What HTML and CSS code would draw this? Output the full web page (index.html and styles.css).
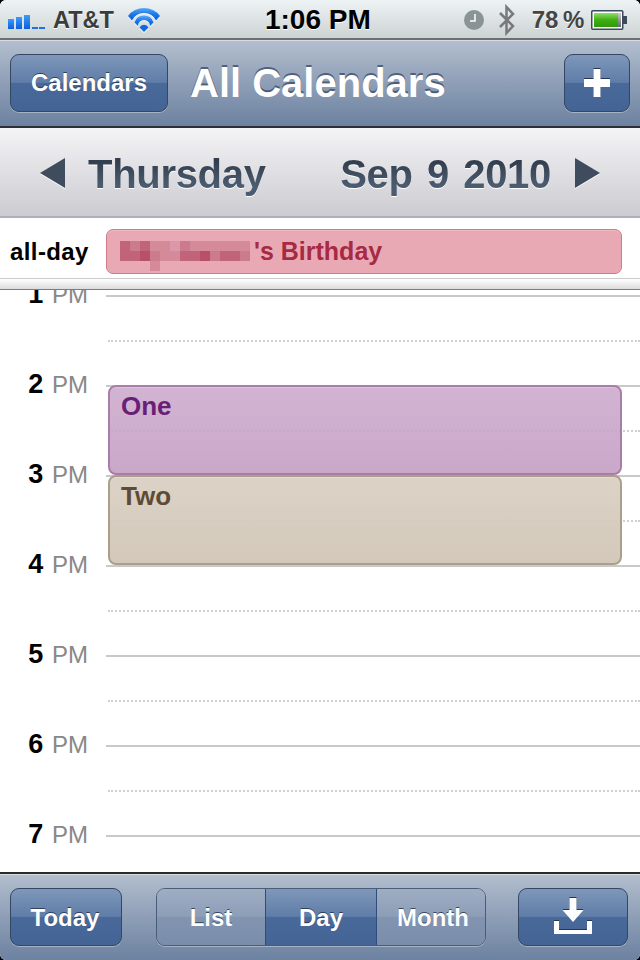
FILE: index.html
```html
<!DOCTYPE html>
<html lang="en">
<head>
  <meta charset="UTF-8" />
  <title>All Calendars</title>
  <link rel="stylesheet" href="styles.css">
</head>
<body>
<div class="screen">

  <!-- Status bar -->
  <div class="status">
    <svg class="signal" width="38" height="14" viewBox="0 0 38 14">
      <defs>
        <linearGradient id="barFill" x1="0" y1="0" x2="0" y2="1">
          <stop offset="0" stop-color="#3f9bf5"/>
          <stop offset="1" stop-color="#0a5fdc"/>
        </linearGradient>
        <linearGradient id="wifiFill" x1="0" y1="0" x2="0" y2="1">
          <stop offset="0" stop-color="#5aaaf8"/>
          <stop offset="0.5" stop-color="#1a78ea"/>
          <stop offset="1" stop-color="#0a5fdc"/>
        </linearGradient>
      </defs>
      <rect x="0" y="4" width="6" height="10" fill="url(#barFill)"/>
      <rect x="8" y="2" width="6" height="12" fill="url(#barFill)"/>
      <rect x="16" y="0" width="6" height="14" fill="url(#barFill)"/>
      <rect x="24" y="12" width="6" height="2" fill="#1a73e8"/>
      <rect x="31" y="12" width="6" height="2" fill="#1a73e8"/>
    </svg>
    <span class="carrier">AT&amp;T</span>
    <svg class="wifi" width="32" height="24" viewBox="0 0 32 24">
      <path d="M0 8 A20 20 0 0 1 32 8 L28 12.500 A13.300 13.300 0 0 0 4 12.500 Z" fill="url(#wifiFill)"/>
      <path d="M6.500 14.500 A10 10 0 0 1 25.500 14.500 L22 18 A6 6 0 0 0 10 18 Z" fill="url(#wifiFill)"/>
      <path d="M16 24 L11.500 19.500 A5 5 0 0 1 20.500 19.500 Z" fill="#0f68e0"/>
    </svg>
    <span class="time">1:06 PM</span>
    <svg class="clock" width="20" height="20" viewBox="0 0 20 20">
      <circle cx="10" cy="10" r="10" fill="#8b9494"/>
      <path d="M11 4 V11 H6" fill="none" stroke="#fff" stroke-width="1.500"/>
    </svg>
    <svg class="bluetooth" width="18" height="32" viewBox="0 0 18 32">
      <path d="M2 9 L15 22 L8.500 29 V3 L15 10 L2 23" fill="none" stroke="#77797a" stroke-width="2.500"/>
    </svg>
    <span class="battery-text">78 %</span>
    <svg class="battery" width="38" height="20" viewBox="0 0 38 20">
      <defs>
        <linearGradient id="batteryFill" x1="0" y1="0" x2="0" y2="1">
          <stop offset="0" stop-color="#8ee06a"/>
          <stop offset="0.5" stop-color="#3fae12"/>
          <stop offset="1" stop-color="#2f9a0a"/>
        </linearGradient>
        <linearGradient id="batteryEmpty" x1="0" y1="0" x2="0" y2="1">
          <stop offset="0" stop-color="#ccc"/>
          <stop offset="1" stop-color="#666"/>
        </linearGradient>
      </defs>
      <rect x="0.750" y="0.750" width="31" height="18.500" rx="1" fill="#fff" stroke="#3d4a5c" stroke-width="1.500"/>
      <rect x="3" y="3" width="24" height="14" fill="url(#batteryFill)"/>
      <rect x="27" y="3" width="3" height="14" fill="url(#batteryEmpty)"/>
      <rect x="32" y="6" width="4" height="8" fill="#3d4a5c"/>
    </svg>
  </div>

  <!-- Nav bar -->
  <div class="navbar">
    <div class="btn btn-calendars">Calendars</div>
    <div class="title">All Calendars</div>
    <div class="btn btn-add">
      <svg class="glyph" width="26" height="28" viewBox="0 0 26 28"><path d="M9.500 0 H16.500 V10 H26 V18 H16.500 V28 H9.500 V18 H0 V10 H9.500 Z" fill="#fff"/></svg>
    </div>
  </div>

  <!-- Date bar -->
  <div class="datebar">
    <svg class="arrow" width="25" height="30" viewBox="0 0 25 30"><path d="M25 0 V30 L0 15 Z" fill="#3f4c5e"/></svg>
    <span class="day">Thursday</span>
    <span class="date">Sep 9 2010</span>
    <svg class="arrow" width="25" height="30" viewBox="0 0 25 30"><path d="M0 0 V30 L25 15 Z" fill="#3f4c5e"/></svg>
  </div>

  <!-- All-day row -->
  <div class="allday">
    <span class="allday-label">all-day</span>
    <div class="allday-event">
      <div class="pixels">
        <i class="p2"></i><i class="p3"></i><i class="p2"></i><i class="p4"></i><i class="p4"></i><i class="p5"></i><i class="p3"></i><i class="p4"></i><i class="p4"></i><i class="p4"></i><i class="p4"></i><i class="p4"></i><i class="p4"></i>
        <i class="p2"></i><i class="p2"></i><i class="p1"></i><i class="p3"></i><i class="p4"></i><i class="p4"></i><i class="p2"></i><i class="p2"></i><i class="p1"></i><i class="p3"></i><i class="p2"></i><i class="p2"></i><i class="p3"></i>
        <i class="p0"></i><i class="p0"></i><i class="p0"></i><i class="p4"></i>
      </div>
      <span class="allday-text">'s Birthday</span>
    </div>
  </div>
  <div class="shade"></div>

  <!-- Timeline -->
  <div class="timeline">
    <div class="hour"><div class="label"><b>1</b> PM</div><div class="slot"><div class="half"></div></div></div>
    <div class="hour"><div class="label"><b>2</b> PM</div><div class="slot"><div class="half"></div></div></div>
    <div class="hour"><div class="label"><b>3</b> PM</div><div class="slot"><div class="half"></div></div></div>
    <div class="hour"><div class="label"><b>4</b> PM</div><div class="slot"><div class="half"></div></div></div>
    <div class="hour"><div class="label"><b>5</b> PM</div><div class="slot"><div class="half"></div></div></div>
    <div class="hour"><div class="label"><b>6</b> PM</div><div class="slot"><div class="half"></div></div></div>
    <div class="hour"><div class="label"><b>7</b> PM</div><div class="slot"></div></div>

    <div class="event event-one">One</div>
    <div class="event event-two">Two</div>
  </div>

  <!-- Toolbar -->
  <div class="toolbar">
    <div class="btn btn-today">Today</div>
    <div class="segments">
      <div class="seg seg-list">List</div>
      <div class="seg seg-day">Day</div>
      <div class="seg seg-month">Month</div>
    </div>
    <div class="btn btn-inbox">
      <svg class="glyph" width="38" height="36" viewBox="0 0 38 36">
        <path d="M15.500 0 H22.500 V12 H29.500 L19 24 L8.500 12 H15.500 Z" fill="#fff"/>
        <path d="M0 23 H5 V32 H33 V23 H38 V36 H0 Z" fill="#fff"/>
      </svg>
    </div>
  </div>

</div>
</body>
</html>
```

FILE: styles.css
```css
html, body { margin: 0; padding: 0; background: #000; }
body { font-family: "Liberation Sans", Arial, sans-serif; }

.screen {
  width: 640px; height: 960px; overflow: hidden;
  display: flex; flex-direction: column;
  background: #fff; border-radius: 6px;
}

/* status bar */
.status {
  height: 40px; flex: none; box-sizing: border-box;
  display: flex; align-items: center; padding: 2px 0 0 8px;
  background: linear-gradient(#eef3f5, #cdd2d3);
  border-bottom: 2px solid #6b6e72;
}
.signal { margin-right: 7px; margin-top: 3px; }
.carrier { font-size: 23.5px; font-weight: bold; color: #3c3c3c; text-shadow: 0 1px 0 #fff; }
.wifi { margin-left: 14px; filter: drop-shadow(0 1px 0 #fff); }
.time {
  font-size: 28px; font-weight: bold; color: #000;
  margin-left: 105px; text-shadow: 0 1px 0 #fff;
}
.clock { margin-left: 93px; }
.bluetooth { margin-left: 14px; }
.battery-text {
  margin-left: 16px; font-size: 24px; font-weight: bold; color: #454545;
  word-spacing: -2px; text-shadow: 0 1px 0 #fff;
}
.battery { margin-left: 7px; }

/* nav bar */
.navbar {
  height: 88px; flex: none; box-sizing: border-box;
  display: flex; align-items: center; padding: 0 10px 1px;
  background: linear-gradient(#b3bfcf, #8e9eb6 50%, #6c82a1);
  border-top: 1px solid #d5dce4;
  border-bottom: 2px solid #2b2f36;
}
.btn {
  height: 58px; box-sizing: border-box;
  display: flex; align-items: center; justify-content: center;
  border: 1px solid #344863; border-radius: 9px;
  background: linear-gradient(#7f97b9, #5f7da8 49%, #48699a 50%, #436494);
  box-shadow: 0 1px 0 rgba(255,255,255,.35);
  color: #fff; font-weight: bold; font-size: 24px;
  text-shadow: 0 -1px 0 rgba(30,45,70,.8);
}
.glyph { filter: drop-shadow(0 -1px 0 #27354f); }
.btn-calendars { width: 158px; }
.title {
  margin-left: 22px; font-size: 40px; font-weight: bold; color: #fff;
  text-shadow: 0 -2px 0 rgba(50,65,90,.7);
}
.btn-add { width: 66px; margin-left: auto; }

/* date bar */
.datebar {
  height: 90px; flex: none; box-sizing: border-box;
  display: flex; align-items: center; padding: 0 40px;
  background: linear-gradient(#f4f4f6, #cbcbd1);
  border-bottom: 2px solid #aeafb8;
}
.arrow { margin-top: 1px; filter: drop-shadow(0 1px 0 #fff); }
.day, .date {
  margin-top: 4px; font-size: 40px; font-weight: bold; letter-spacing: -.3px;
  color: transparent;
  background: linear-gradient(#323e4e 20%, #4c5c70 75%);
  -webkit-background-clip: text; background-clip: text;
  filter: drop-shadow(0 1.500px 0 #fff);
}
.day { margin-left: 23px; }
.date { margin-left: auto; margin-right: 24px; word-spacing: 3.500px; }

/* all-day row */
.allday {
  height: 61px; flex: none; box-sizing: border-box;
  display: flex; align-items: center; padding: 7px 18px 0 10px;
  border-bottom: 1px solid #ccc;
}
.allday-label { width: 96px; font-size: 24px; font-weight: bold; color: #000; letter-spacing: .4px; }
.allday-event {
  flex: 1; height: 45px; box-sizing: border-box;
  display: flex; align-items: center; padding-left: 13px;
  background: #e8a9b4; border: 1px solid #d27a8a; border-radius: 7px;
  box-shadow: inset 0 1px 0 #eebac3;
}
.allday-text { font-size: 25px; font-weight: bold; color: #a72a45; margin-left: 4px; }
.pixels {
  display: grid; grid-template-columns: repeat(13, 10px); grid-auto-rows: 10px;
  height: 20px; margin-top: -1px;
}
.pixels i { display: block; }
.p0 { background: transparent; }
.p1 { background: #b9506a; }
.p2 { background: #c26479; }
.p3 { background: #cc7b8d; }
.p4 { background: #d58a9a; }
.p5 { background: #dc98a8; }

.shade {
  height: 11px; flex: none; box-sizing: border-box;
  background: linear-gradient(#fff, #dcdcdc);
  border-bottom: 1px solid #7d7d7d;
}

/* timeline */
.timeline { flex: 1; position: relative; overflow: hidden; padding-top: 5px; }
.hour { height: 90px; display: flex; }
.label {
  width: 106px; box-sizing: border-box; height: 30px;
  margin-top: -16px; padding-right: 18px;
  text-align: right; font-size: 24px; line-height: 30px; color: #888;
}
.label b { font-size: 27px; color: #000; margin-right: 2px; }
.slot { flex: 1; border-top: 2px solid #c9c9c9; }
.half { margin: 43px 0 0 2px; border-top: 2px dotted #d0d0d0; }

.event {
  position: absolute; left: 108px; right: 18px; height: 90px;
  box-sizing: border-box; padding: 4px 11px;
  border-radius: 8px; font-size: 26px; font-weight: bold; line-height: 30px;
  box-shadow: inset 0 1px 0 rgba(255,255,255,.2);
}
.event-one {
  top: 95px; color: #6a1f77; border: 2px solid #a97da9;
  background: linear-gradient(rgba(205,172,205,.9), rgba(197,160,197,.92));
}
.event-two {
  top: 185px; color: #5e4b35; border: 2px solid #ab9f8c;
  background: linear-gradient(rgba(217,206,193,.92), rgba(209,198,182,.95));
}

/* toolbar */
.toolbar {
  height: 88px; flex: none; box-sizing: border-box;
  display: flex; align-items: center; padding: 0 12px 0 10px;
  justify-content: space-between;
  background: linear-gradient(#b3bfcf, #8e9eb6 50%, #6c82a1);
  border-top: 2px solid #2b2b2b;
  box-shadow: inset 0 1px 0 #d5dce4;
}
.btn-today { width: 112px; padding: 2px 2px 0 0; }
.btn-inbox { width: 110px; }
.btn-inbox svg { margin-top: -2px; }
.segments {
  width: 330px; height: 58px; box-sizing: border-box;
  display: flex; margin-left: 24px; margin-right: 22px;
  border: 1px solid #4a5d78; border-radius: 9px; overflow: hidden;
  box-shadow: 0 1px 0 rgba(255,255,255,.35);
}
.seg {
  display: flex; align-items: center; justify-content: center;
  box-sizing: border-box; padding-top: 2px;
  color: #fff; font-weight: bold; font-size: 24px;
  text-shadow: 0 -1px 0 rgba(30,45,70,.8);
  background: linear-gradient(#a0aec3, #8c9db7 49%, #8294b0 50%, #7a8daa);
}
.seg-list { width: 108px; }
.seg-day {
  width: 112px; border-left: 1px solid #2e4c7c; border-right: 1px solid #2e4c7c;
  background: linear-gradient(#7f97b9, #5f7da8 49%, #48699a 50%, #436494);
}
.seg-month { flex: 1; padding-left: 4px; }
```
